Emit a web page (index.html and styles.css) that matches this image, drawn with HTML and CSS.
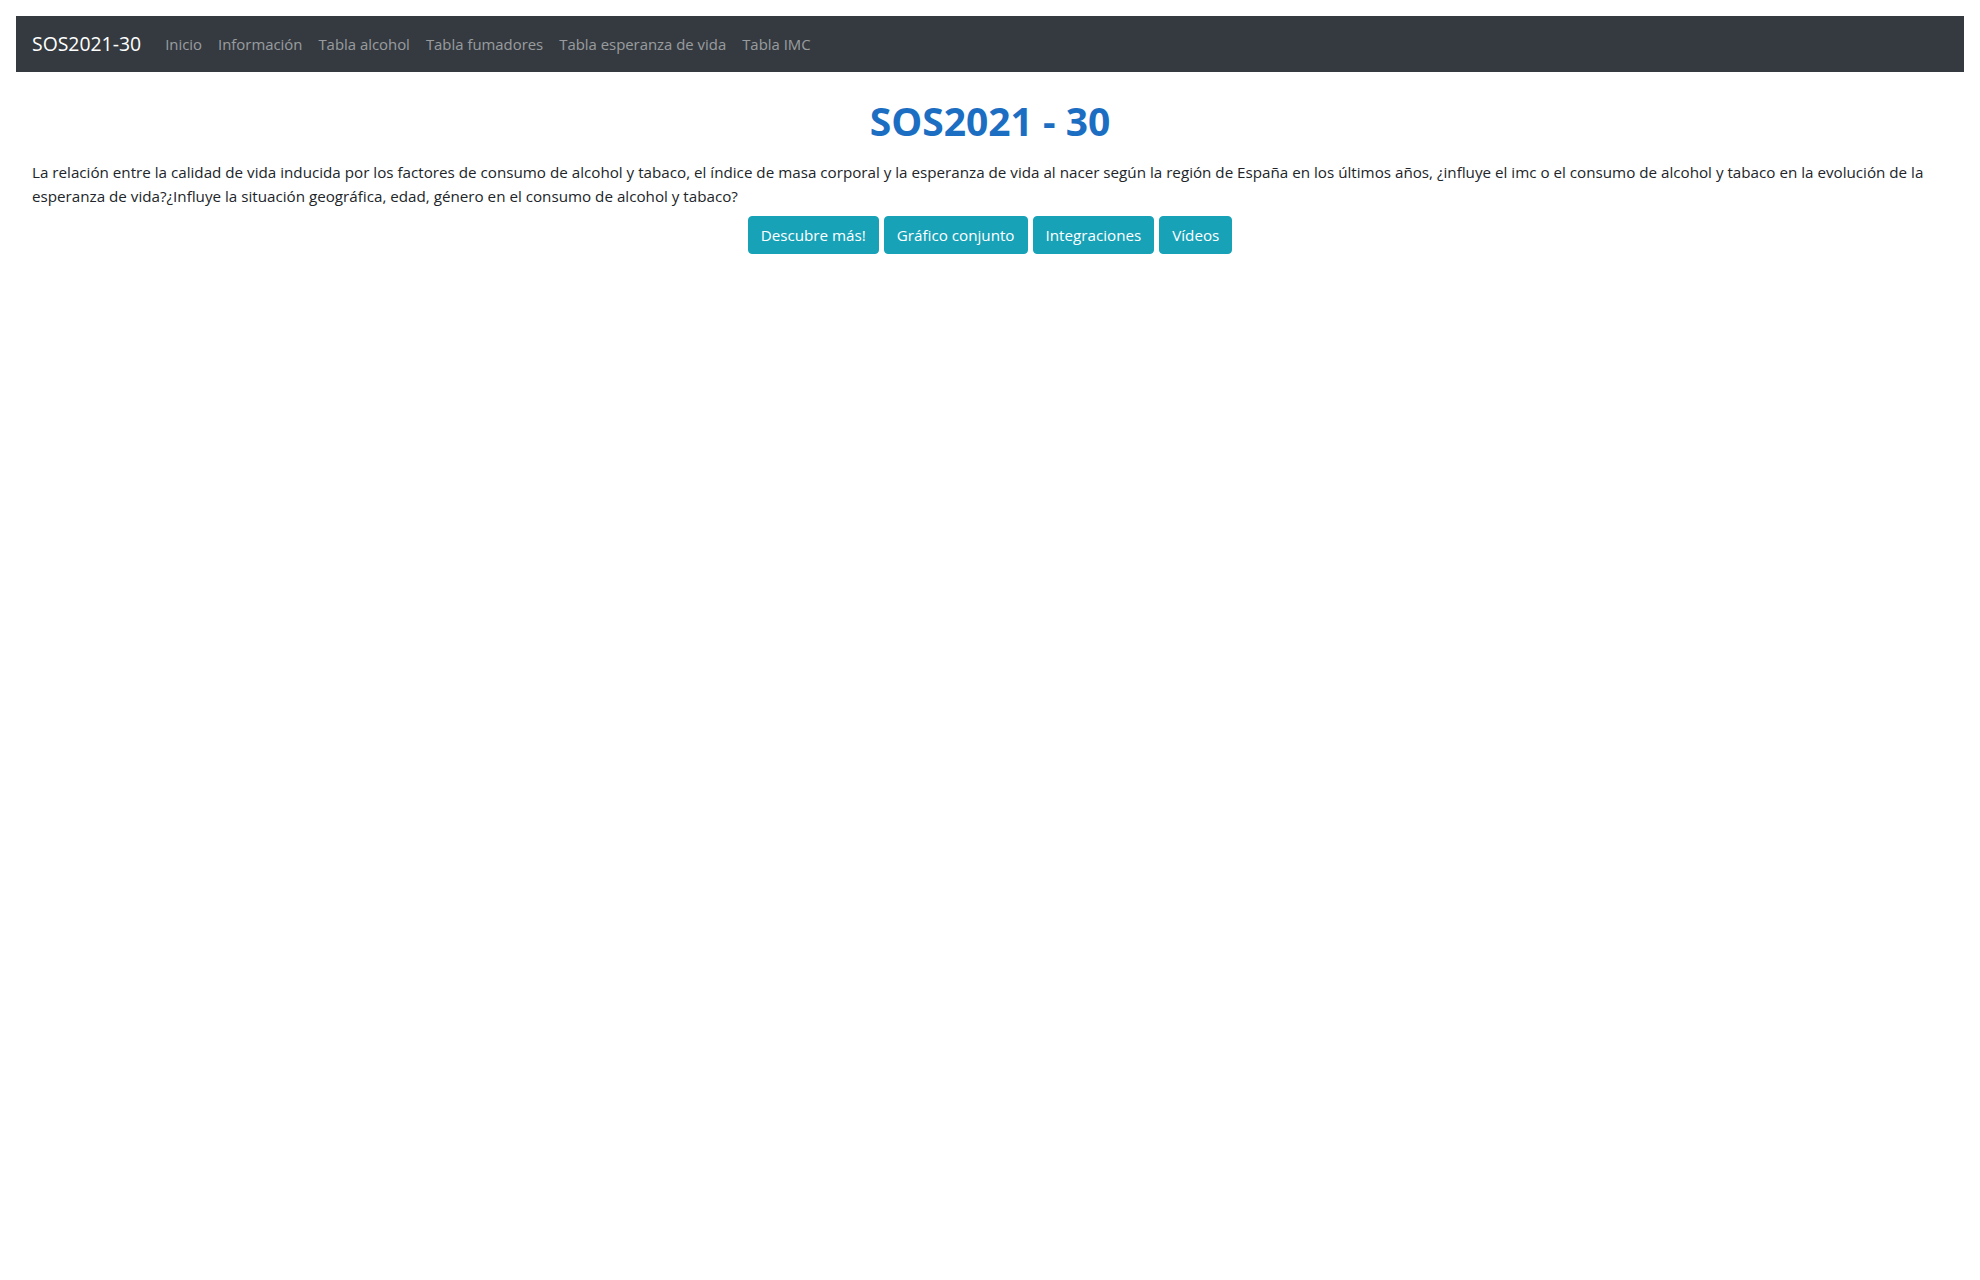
FILE: index.html
```html
<!DOCTYPE html>
<html lang="es">
<head>
<meta charset="utf-8">
<title>SOS2021-30</title>
<link rel="stylesheet" href="styles.css">
</head>
<body>
<div class="page">
  <nav class="navbar">
    <a class="brand" href="#">SOS2021-30</a>
    <ul class="nav">
      <li><a href="#">Inicio</a></li>
      <li><a href="#">Información</a></li>
      <li><a href="#">Tabla alcohol</a></li>
      <li><a href="#">Tabla fumadores</a></li>
      <li><a href="#">Tabla esperanza de vida</a></li>
      <li><a href="#">Tabla IMC</a></li>
    </ul>
  </nav>
  <main class="main">
    <h1 class="title">SOS2021 - 30</h1>
    <p class="intro">La relación entre la calidad de vida inducida por los factores de consumo de alcohol y tabaco, el índice de masa corporal y la esperanza de vida al nacer según la región de España en los últimos años, ¿influye el imc o el consumo de alcohol y tabaco en la evolución de la esperanza de vida?¿Influye la situación geográfica, edad, género en el consumo de alcohol y tabaco?</p>
    <div class="actions">
      <a class="btn" href="#">Descubre más!</a>
      <a class="btn" href="#">Gráfico conjunto</a>
      <a class="btn" href="#">Integraciones</a>
      <a class="btn" href="#">Vídeos</a>
    </div>
  </main>
</div>
</body>
</html>
```

FILE: styles.css
```css
html, body { margin: 0; padding: 0; background: #fff; }
body { font-family: "Open Sans", "Liberation Sans", sans-serif; font-size: 15.2px; line-height: 24px; color: #212529; }
.page { padding: 16px; }
.navbar { display: flex; align-items: center; background: #343a40; padding: 8px 16px; }
.brand { color: #fff; font-size: 19.4px; line-height: 30px; padding: 5px 0; margin-right: 16px; text-decoration: none; }
.nav { display: flex; list-style: none; margin: 0; padding: 0; }
.nav a { display: block; padding: 8px; font-size: 14.9px; color: rgba(255,255,255,.5); text-decoration: none; }
.main { padding: 0 16px; }
.title { text-align: center; color: #1b6ec2; font-size: 39px; font-weight: 700; line-height: 48px; margin: 25px 0 15px; }
.intro { margin: 0 0 8px; }
.actions { display: flex; justify-content: center; gap: 5px; }
.btn { display: block; background: #17a2b8; color: #fff; border: 1px solid #17a2b8; border-radius: 4px; padding: 6px 12px; line-height: 24px; text-decoration: none; }
```
